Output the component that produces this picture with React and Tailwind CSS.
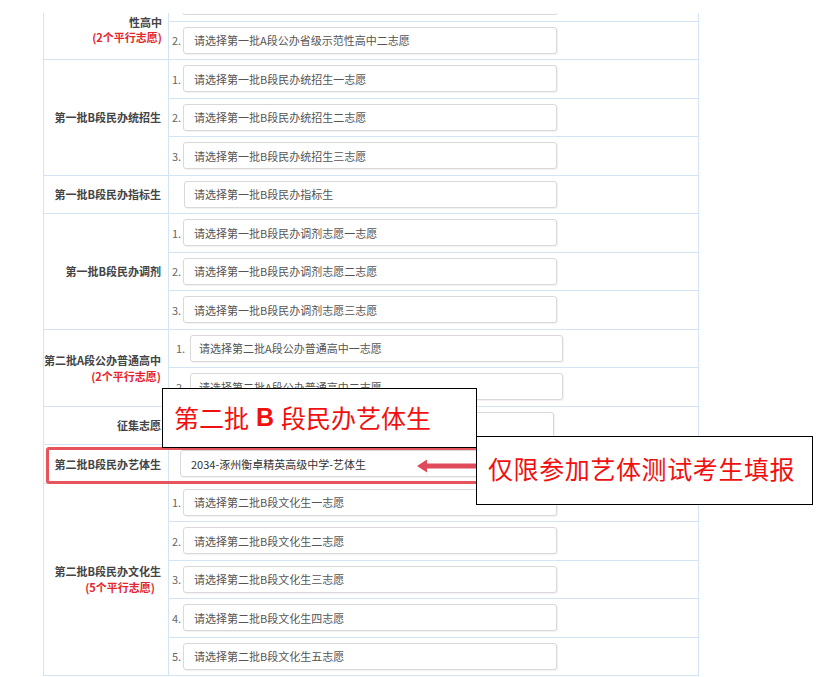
import React from 'react'

const cjk = "font-['Noto_Sans_CJK_SC','Microsoft_YaHei',sans-serif]"

// each section: left label + stacked rows of choice boxes
const sections = [
  {
    label: '第一批B段民办统招生',
    pad: 'pl-[3px]', numW: 'w-[11px]', boxW: 'w-[374px]', textPad: 'pl-[10px]',
    rows: [
      { n: '1.', text: '请选择第一批B段民办统招生一志愿' },
      { n: '2.', text: '请选择第一批B段民办统招生二志愿' },
      { n: '3.', text: '请选择第一批B段民办统招生三志愿' },
    ],
  },
  {
    label: '第一批B段民办指标生',
    pad: 'pl-[15px]', boxW: 'w-[373px]', textPad: 'pl-[9px]',
    rows: [{ text: '请选择第一批B段民办指标生' }],
  },
  {
    label: '第一批B段民办调剂',
    pad: 'pl-[3px]', numW: 'w-[11px]', boxW: 'w-[374px]', textPad: 'pl-[10px]',
    rows: [
      { n: '1.', text: '请选择第一批B段民办调剂志愿一志愿' },
      { n: '2.', text: '请选择第一批B段民办调剂志愿二志愿' },
      { n: '3.', text: '请选择第一批B段民办调剂志愿三志愿' },
    ],
  },
  {
    label: '第二批A段公办普通高中',
    note: '(2个平行志愿)',
    notePad: 'pr-0',
    pad: 'pl-[7px]', numW: 'w-[14px]', boxW: 'w-[373px]', textPad: 'pl-[8px]',
    rows: [
      { n: '1.', text: '请选择第二批A段公办普通高中一志愿' },
      { n: '2.', text: '请选择第二批A段公办普通高中二志愿' },
    ],
  },
  {
    label: '征集志愿',
    pad: 'pl-[12px]', boxW: 'w-[373px]', textPad: 'pl-[10px]',
    rows: [{ text: '' }],
  },
  {
    label: '第二批B段民办艺体生',
    pad: 'pl-[11px]', boxW: 'w-[380px]', textPad: 'pl-[10px]',
    rows: [{ text: '2034-涿州衡卓精英高级中学-艺体生', dark: true }],
  },
  {
    label: '第二批B段民办文化生',
    note: '(5个平行志愿)',
    notePad: 'pr-[6px]',
    pad: 'pl-[3px]', numW: 'w-[11px]', boxW: 'w-[374px]', textPad: 'pl-[10px]',
    rows: [
      { n: '1.', text: '请选择第二批B段文化生一志愿' },
      { n: '2.', text: '请选择第二批B段文化生二志愿' },
      { n: '3.', text: '请选择第二批B段文化生三志愿' },
      { n: '4.', text: '请选择第二批B段文化生四志愿' },
      { n: '5.', text: '请选择第二批B段文化生五志愿' },
    ],
  },
]

const ChoiceBox = ({ w, textPad, text, dark }) => (
  <div
    className={`${w} h-[27px] flex items-center ${textPad} bg-white border border-[#d9d9d9] rounded-[3px] shadow-[1px_1px_1px_rgba(0,0,0,0.06)] text-[11px] ${dark ? 'text-[#333]' : 'text-[#555]'} whitespace-nowrap overflow-hidden`}
  >
    {text}
  </div>
)

const Section = ({ s }) => (
  <div className="flex border-b border-[#d3e5f4]">
    <div className="w-[125px] shrink-0 border-r border-[#d3e5f4] flex flex-col items-end justify-center pr-[7px] leading-[16px] text-[11px] font-bold text-[#444]">
      <span className="whitespace-nowrap">{s.label}</span>
      {s.note && <span className={`text-[#e4252b] ${s.notePad}`}>{s.note}</span>}
    </div>
    <div className="flex-1 divide-y divide-[#d3e5f4]">
      {s.rows.map((r, i) => (
        <div key={i} className={`box-content h-[37.5px] flex items-center ${s.pad}`}>
          {s.numW && <span className={`${s.numW} text-[11px] text-[#666]`}>{r.n}</span>}
          <ChoiceBox w={s.boxW} textPad={s.textPad} text={r.text} dark={r.dark} />
        </div>
      ))}
    </div>
  </div>
)

export default function App() {
  return (
    <div className={`relative w-[824px] h-[677px] overflow-hidden bg-white pt-[13px] ${cjk}`}>
      <div className="ml-[43px] w-[656px] border-x border-[#d3e5f4]">
        {/* first section, cut off at the top of the capture */}
        <div className="flex border-b border-[#d3e5f4]">
          <div className="w-[125px] shrink-0 border-r border-[#d3e5f4] flex flex-col items-end pt-[1.5px] pr-[6px] leading-[15px] text-[11px] font-bold text-[#444]">
            <span>性高中</span>
            <span className="text-[#e4252b]">(2个平行志愿)</span>
          </div>
          <div className="flex-1 divide-y divide-[#d3e5f4]">
            <div className="box-content h-[7.5px] pl-[14px]">
              <div className="w-[374px] h-[2px] border-x border-b border-[#d9d9d9] rounded-b-[3px]" />
            </div>
            <div className="box-content h-[37.5px] flex items-center pl-[3px]">
              <span className="w-[11px] text-[11px] text-[#666]">2.</span>
              <ChoiceBox w="w-[374px]" textPad="pl-[10px]" text="请选择第一批A段公办省级示范性高中二志愿" />
            </div>
          </div>
        </div>
        {sections.map((s) => (
          <Section key={s.label} s={s} />
        ))}
      </div>

      {/* highlight around the 艺体生 row */}
      <div className="absolute left-[46px] top-[447px] w-[660px] h-[37px] border-[3px] border-[#e8545c] rounded-[3px]" />

      {/* arrow */}
      <svg className="absolute left-[416px] top-[459px]" width="62" height="14" viewBox="0 0 62 14">
        <polygon points="1,7 11,0.5 11,13.5" fill="#e04b5b" />
        <rect x="10" y="4.5" width="52" height="5" fill="#e04b5b" />
      </svg>

      {/* callouts */}
      <div className="absolute left-[162px] top-[388px] w-[315px] h-[60px] bg-white border-[1.5px] border-black flex items-center pl-[11px] pb-[2px] text-[25px] leading-none text-[#f01010] whitespace-nowrap">
        第二批 <span className="mx-[7px] font-bold font-['Liberation_Sans',sans-serif]">B</span> 段民办艺体生
      </div>
      <div className="absolute left-[476px] top-[436px] w-[337px] h-[69px] bg-white border-[1.5px] border-black pl-[11px] pt-[17px] text-[25px] leading-[28px] tracking-[0.6px] text-[#f01010] whitespace-nowrap">
        仅限参加艺体测试考生填报
      </div>
    </div>
  )
}
